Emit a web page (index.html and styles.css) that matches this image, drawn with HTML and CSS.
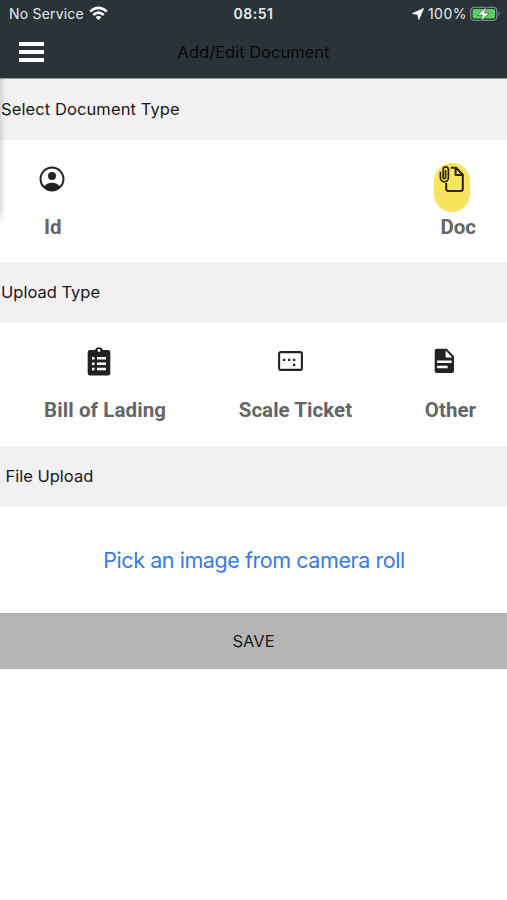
FILE: index.html
```html
<!DOCTYPE html>
<html lang="en">
<head>
<meta charset="utf-8">
<meta name="viewport" content="width=device-width, initial-scale=1">
<title>Add/Edit Document</title>
<link rel="stylesheet" href="styles.css">
</head>
<body>
<header class="header">
  <div class="status">
    <div class="status-left">
      <span class="carrier">No Service</span>
      <svg class="wifi" width="19" height="15" viewBox="0 0 19 15"><g fill="none" stroke="#fff" stroke-width="2.5"><path d="M1.2 5.5Q9.5-1.8 17.8 5.5"/><path d="M4.3 9Q9.5 4.2 14.7 9"/></g><path d="M9.5 14.2 6.6 11.1Q9.5 8.8 12.4 11.1Z" fill="#fff"/></svg>
    </div>
    <time class="clock">08:51</time>
    <div class="status-right">
      <svg width="12" height="12" viewBox="0 0 12 12"><path d="M11.6.4 6.8 11.6 5.8 6.4.4 5.6Z" fill="#fff" stroke="#fff" stroke-width=".7"/></svg>
      <span class="percent">100%</span>
      <svg class="battery" width="31" height="16" viewBox="0 0 31 16"><rect x=".8" y="1.3" width="26" height="13" rx="3.5" fill="none" stroke="#7d8588" stroke-width="1.2"/><rect x="2.6" y="3.1" width="22.4" height="9.4" rx="1.8" fill="#59cf60"/><path d="M28.3 5.5Q30.6 7.8 28.3 10.3Z" fill="#7d8588"/><path d="M16.5.8 7.6 9h4.8l-1.7 6.2L19.4 7h-4.8Z" fill="#fff" stroke="#2a3338" stroke-width=".6"/></svg>
    </div>
  </div>
  <div class="titlebar">
    <button class="menu" aria-label="Menu"><i></i><i></i><i></i></button>
    <h1 class="title">Add/Edit Document</h1>
  </div>
</header>
<main>
  <h2 class="section section-type">Select Document Type</h2>
  <div class="options">
    <button class="option">
      <span class="icon icon-id"><svg width="30" height="30" viewBox="0 0 24 24"><circle cx="12" cy="12" r="9.2" fill="none" stroke="#202224" stroke-width="1.5"/><circle cx="12" cy="9.6" r="3.2"/><path d="M5.5 18Q8 14.9 12 14.9T18.5 18Q16 21.2 12 21.2T5.5 18Z"/></svg></span>
      <span class="label">Id</span>
    </button>
    <button class="option">
      <span class="icon icon-doc"><svg width="26" height="31" viewBox="0 0 26 31"><g fill="none" stroke="#2b2412" stroke-width="2" stroke-linejoin="round"><path d="M11.8 2.7H17l6.8 7v14.2q0 2-2 2H9.2q-2 0-2-2v-6"/><path d="M16.6 3v7.1h7"/><path d="M1.4 6.7v6.1a4 4 0 0 0 8 0V4.4a2.6 2.6 0 0 0-5.2 0v8a1.2 1.2 0 0 0 2.4 0V5" stroke-width="1.7"/></g></svg></span>
      <span class="label">Doc</span>
    </button>
  </div>
  <h2 class="section">Upload Type</h2>
  <div class="options options-upload">
    <button class="option">
      <span class="icon icon-bill"><svg width="24" height="31" viewBox="0 0 24 31"><path fill-rule="evenodd" d="M3 4H8.1a4.1 4.1 0 0 1 7.8 0H21q2.3 0 2.3 2.3v20.9q0 2.3-2.3 2.3H3q-2.3 0-2.3-2.3V6.3Q.7 4 3 4ZM12 3.1a1.4 1.4 0 1 0 0 2.8 1.4 1.4 0 0 0 0-2.8Z"/><path fill="#fff" d="M5 11h2.5v2.5H5zm5 0h9v2.5h-9zM5 16.4h2.5v2.5H5zm5 0h9v2.5h-9zM5 21.8h2.5v2.5H5zm5 0h9v2.5h-9z"/></svg></span>
      <span class="label label-bill">Bill of Lading</span>
    </button>
    <button class="option">
      <span class="icon icon-scale"><svg width="25" height="20" viewBox="0 0 25 20"><rect x="1.1" y="1.1" width="22.8" height="17.8" rx="1.7" fill="none" stroke="#202224" stroke-width="2.1"/><path d="M5 7.8h2.3v2.3H5zm5 0h2.3v2.3H10zm5 0h2.3v2.3H15zm0 4.9h2.3V15H15z"/></svg></span>
      <span class="label label-scale">Scale Ticket</span>
    </button>
    <button class="option">
      <span class="icon icon-other"><svg width="21" height="26" viewBox="0 0 21 26"><path d="M3 .8h9.8l7.2 7.4v14.6q0 2.3-2.3 2.3H3q-2.3 0-2.3-2.3V3.1Q.7.8 3 .8Z"/><path fill="#fff" d="M11.6 2.6v6.9h6.8zM3.1 12.5h14.6v2.6H3.1zm0 5.2h10.5v2.5H3.1z"/></svg></span>
      <span class="label">Other</span>
    </button>
  </div>
  <h2 class="section section-file">File Upload</h2>
  <div class="picker"><button class="pick">Pick an image from camera roll</button></div>
  <button class="save">SAVE</button>
</main>
<div class="drawer-shadow"></div>
</body>
</html>
```
FILE: styles.css
```css
* { box-sizing: border-box; }
body {
  margin: 0;
  min-height: 900px;
  background: #fff;
  color: #17191b;
  font-family: Inter, "Liberation Sans", sans-serif;
  overflow: hidden;
}
button {
  margin: 0;
  padding: 0;
  border: 0;
  background: none;
  color: inherit;
  font: inherit;
}
svg { display: block; fill: #202224; }
h1, h2 { margin: 0; font-weight: 400; }

.header {
  height: 79px;
  background: #2a3338;
  border-bottom: 1px solid #929a9c;
}
.status {
  height: 27px;
  padding: 0 6px 0 9px;
  display: grid;
  grid-template-columns: 1fr auto 1fr;
  align-items: center;
  color: #e5e9ea;
  font-size: 14px;
  line-height: 27px;
}
.status-left, .status-right { display: flex; align-items: center; }
.status-left { gap: 5px; }
.status-right { justify-content: flex-end; gap: 4px; }
.carrier { letter-spacing: .2px; }
.clock { margin-right: 3px; font-weight: 600; letter-spacing: .5px; }
.percent { letter-spacing: .5px; margin-right: -1px; }
.titlebar {
  height: 50px;
  padding: 0 19px;
  display: grid;
  grid-template-columns: 25px 1fr 25px;
  align-items: center;
}
.menu { height: 20px; display: flex; flex-direction: column; justify-content: space-between; }
.menu i { width: 25px; height: 4px; background: #fff; }
.title { text-align: center; font-size: 16.5px; line-height: 24px; color: #07090a; }

.section {
  height: 61px;
  padding-left: 1px;
  background: #f2f0f1;
  font-size: 16.5px;
  line-height: 61px;
}
.section-type { letter-spacing: .1px; }
.section-file { padding-left: 5.5px; }
.options {
  height: 122px;
  padding: 23px 31px 0 44px;
  display: flex;
  justify-content: space-between;
  align-items: flex-start;
}
.options-upload { height: 123px; }
.option { display: flex; flex-direction: column; align-items: flex-start; }
.icon { height: 49px; display: flex; }
.icon-id { margin: 1px 0 -1px -7px; }
.icon-doc {
  width: 36px;
  margin-left: -6px;
  padding: 2px 0 0 5px;
  border-radius: 18px;
  background: #fae35f;
}
.icon-bill { margin-left: 43px; }
.icon-scale { margin-left: 39px; padding-top: 5px; }
.icon-other { margin-left: 9px; padding-top: 2px; }
.label {
  color: #656565;
  font-family: Roboto, sans-serif;
  font-size: 20.5px;
  font-weight: 700;
  line-height: 30px;
  white-space: nowrap;
}
.label-bill { letter-spacing: .1px; }
.label-scale { letter-spacing: .05px; }
.picker { height: 106px; padding-left: 1px; display: flex; align-items: center; justify-content: center; }
.pick { color: #397ae6; font-size: 21.5px; line-height: 30px; letter-spacing: -.43px; }
.save {
  display: block;
  width: 100%;
  height: 56px;
  background: #b5b5b5;
  font-size: 16.5px;
}
.drawer-shadow {
  position: absolute;
  top: 79px;
  left: 0;
  width: 6px;
  height: 147px;
  background: linear-gradient(90deg, rgba(0, 0, 0, .12), transparent);
  mask-image: linear-gradient(#000 90%, transparent);
}
```
